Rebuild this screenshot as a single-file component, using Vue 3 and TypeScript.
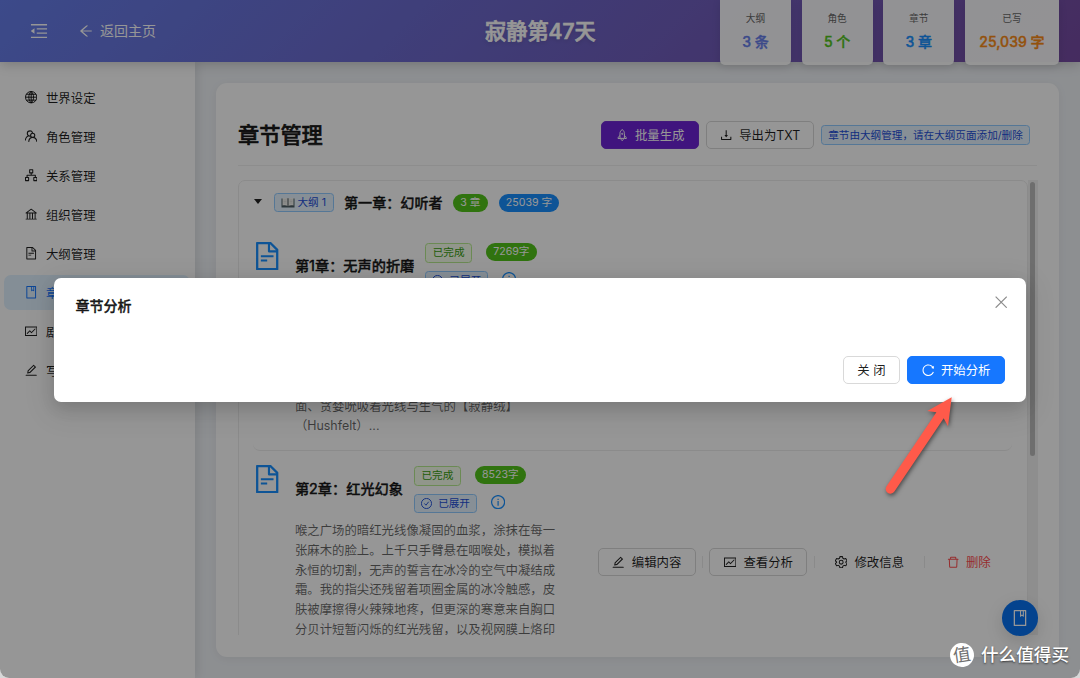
<script setup lang="ts">
import { h } from 'vue'

interface Glyph {
  fill?: string
  stroke?: string
  width?: number
}

const glyphs: Record<string, Glyph> = {
  menuFold: {
    fill: 'M400 370h512v72H400zM400 582h512v72H400zM112 160h800v72H112zM112 792h800v72H112zM115.4 518.9L271.7 642c5.8 4.6 14.4.5 14.4-6.9V388.9c0-7.400-8.500-11.500-14.400-6.900L115.400 505.100a8.740 8.740 0 000 13.800z',
  },
  arrowLeft: {
    fill: 'M872 474H286.9l350.2-304c5.6-4.9 2.2-14-5.2-14h-88.500c-3.900 0-7.600 1.400-10.500 3.900L155 487.800a31.960 31.960 0 000 48.300L535.100 866c1.500 1.300 3.300 2 5.200 2h91.500c7.400 0 10.800-9.200 5.200-14L286.900 550H872c4.400 0 8-3.600 8-8v-60c0-4.400-3.600-8-8-8z',
  },
  global: {
    stroke:
      'M512 100a412 412 0 100 824 412 412 0 100-824zM512 100c-230 200-230 624 0 824M512 100c230 200 230 624 0 824M512 100v824M100 512h824M165 300h694M165 724h694',
    width: 72,
  },
  team: {
    stroke:
      'M620 300a150 150 0 110 300 150 150 0 010-300zM330 920c20-190 130-320 290-320s280 130 310 320M450 520c-130-10-220-90-220-200 0-110 80-190 200-190 90 0 150 50 180 130M90 830c0-150 80-290 230-350',
    width: 78,
  },
  apartment: {
    stroke: 'M400 120h224v224H400zM100 680h224v224H100zM700 680h224v224H700zM512 344v168M212 680V512h600v168',
    width: 76,
  },
  bank: {
    fill: 'M894 462c30.900 0 43.800-39.700 18.700-58L530.800 126.200a31.810 31.810 0 00-37.600 0L111.300 404c-25.100 18.200-12.200 58 18.800 58H192v374h-72c-4.400 0-8 3.600-8 8v52c0 4.400 3.600 8 8 8h784c4.400 0 8-3.600 8-8v-52c0-4.400-3.600-8-8-8h-72V462h62zM512 196.700l271.100 197.200H240.900L512 196.700zM264 462h117v374H264V462zm189 0h117v374H453V462zm307 374H642V462h118v374z',
  },
  fileText: {
    fill: 'M854.6 288.6L639.4 73.4c-6-6-14.100-9.400-22.600-9.400H192c-17.700 0-32 14.300-32 32v832c0 17.700 14.300 32 32 32h640c17.700 0 32-14.300 32-32V311.300c0-8.500-3.400-16.700-9.400-22.700zM790.200 326H602V137.800L790.200 326zm1.800 562H232V136h302v216a42 42 0 0042 42h216v494zM504 618H320c-4.400 0-8 3.600-8 8v48c0 4.400 3.600 8 8 8h184c4.400 0 8-3.600 8-8v-48c0-4.400-3.600-8-8-8zM312 490v48c0 4.400 3.600 8 8 8h384c4.400 0 8-3.600 8-8v-48c0-4.400-3.600-8-8-8H320c-4.400 0-8 3.600-8 8z',
  },
  book: {
    fill: 'M832 64H192c-17.700 0-32 14.300-32 32v832c0 17.700 14.300 32 32 32h640c17.700 0 32-14.300 32-32V96c0-17.700-14.300-32-32-32zm-260 72h96v209.900L621.500 312 572 347.400V136zm220 752H232V136h280v296.900c0 3.300 1 6.600 3 9.300a15.900 15.900 0 0022.300 3.700l83.800-59.900 81.400 59.400c2.700 2 6 3.100 9.400 3.100 8.800 0 16-7.200 16-16V136h64v752z',
  },
  fund: {
    fill: 'M926 164H94c-17.700 0-32 14.300-32 32v640c0 17.700 14.300 32 32 32h832c17.700 0 32-14.300 32-32V196c0-17.700-14.300-32-32-32zm-40 632H134V236h752v560zm-658.900-82.300c3.100 3.100 8.200 3.100 11.300 0l172.500-172.500 114.400 114.500c3.100 3.100 8.200 3.100 11.300 0l297-297.200c3.100-3.100 3.100-8.200 0-11.300l-36.800-36.800a8.030 8.030 0 00-11.300 0L531 565 416.600 450.500a8.030 8.030 0 00-11.300 0l-214.900 215a8.030 8.030 0 000 11.300l36.700 36.900z',
  },
  edit: {
    fill: 'M257.7 752c2 0 4-.2 6-.5L431.900 722c2-.4 3.900-1.300 5.300-2.800l423.900-423.900a9.960 9.960 0 000-14.100L694.900 114.900c-1.900-1.900-4.400-2.900-7.100-2.900s-5.200 1-7.100 2.900L256.800 538.800c-1.500 1.500-2.400 3.300-2.800 5.300l-29.500 168.200a33.500 33.500 0 009.400 29.800c6.600 6.400 14.900 9.900 23.800 9.900zm67.400-174.400L687.800 215l73.300 73.300-362.700 362.600-88.900 15.700 15.600-89zM880 836H144c-17.700 0-32 14.300-32 32v36c0 4.400 3.600 8 8 8h784c4.400 0 8-3.600 8-8v-36c0-17.700-14.300-32-32-32z',
  },
  download: {
    fill: 'M505.7 661a8 8 0 0012.600 0l112-141.700c4.100-5.200.4-12.900-6.300-12.900h-74.100V168c0-4.400-3.600-8-8-8h-60c-4.400 0-8 3.600-8 8v338.300H400c-6.700 0-10.400 7.700-6.300 12.900l112 141.800zM878 626h-60c-4.400 0-8 3.600-8 8v154H214V634c0-4.400-3.600-8-8-8h-60c-4.400 0-8 3.600-8 8v198c0 17.700 14.300 32 32 32h684c17.700 0 32-14.300 32-32V634c0-4.400-3.600-8-8-8z',
  },
  trash: {
    fill: 'M360 184h304v72h72v-80c0-35.300-28.700-64-64-64H352c-35.300 0-64 28.700-64 64v80h72v-72zm504 72H160c-17.700 0-32 14.300-32 32v32c0 4.400 3.600 8 8 8h60.400l24.700 523c1.600 34.100 29.800 61 63.900 61h454c34.200 0 62.300-26.800 63.900-61l24.700-523H888c4.400 0 8-3.600 8-8v-32c0-17.700-14.300-32-32-32zM731.300 840H292.700l-24.200-512h487l-24.200 512z',
  },
  reload: {
    fill: 'M909.1 209.3l-56.4 44.1C775.8 155.1 656.2 92 521.9 92 290 92 102.3 279.5 102 511.5 101.7 743.7 289.8 932 521.9 932c181.3 0 335.8-115 394.6-276.1 1.5-4.2-.7-8.9-4.9-10.3l-56.7-19.5a8 8 0 00-10.1 4.8c-1.8 5-3.8 10-5.9 14.9-17.3 41-42.1 77.8-73.7 109.4A344.77 344.77 0 01655.9 829c-42.3 17.9-87.4 27-133.8 27-46.5 0-91.5-9.1-133.8-27A341.5 341.5 0 01279 755.2a342.16 342.16 0 01-73.7-109.4c-17.9-42.4-27-87.4-27-133.9s9.1-91.5 27-133.9c17.3-41 42.1-77.8 73.7-109.4 31.6-31.6 68.4-56.4 109.3-73.8 42.3-17.9 87.4-27 133.8-27 46.5 0 91.5 9.1 133.8 27a341.5 341.5 0 01109.3 73.8c9.9 9.9 19.2 20.4 27.8 31.4l-60.2 47a8 8 0 003 14.1l175.6 43c5 1.2 9.9-2.6 9.9-7.7l.8-180.9c-.1-6.6-7.8-10.3-13-6.2z',
  },
  rocket: {
    stroke:
      'M512 100c-100 70-160 170-160 290v350h320V390c0-120-60-220-160-290zM352 560c-80 20-140 90-140 190h140M672 560c80 20 140 90 140 190H672M512 370a44 44 0 110 88 44 44 0 010-88zM430 750c0 90 30 140 82 150 52-10 82-60 82-150',
    width: 72,
  },
  check: {
    stroke: 'M512 100a412 412 0 100 824 412 412 0 100-824zM340 510l130 140 220-280',
    width: 76,
  },
  info: {
    stroke: 'M512 100a412 412 0 100 824 412 412 0 100-824zM512 450v290M512 300v72',
    width: 76,
  },
  setting: {
    stroke:
      'M420 110h184l30 120 90 52 120-34 92 160-90 84v40l90 84-92 160-120-34-90 52-30 120H420l-30-120-90-52-120 34-92-160 90-84v-40l-90-84 92-160 120 34 90-52zM512 372a140 140 0 110 280 140 140 0 010-280z',
    width: 74,
  },
  close: { stroke: 'M110 110l804 804M914 110L110 914', width: 84 },
}

const Icon = (props: { name: string }) => {
  const g = glyphs[props.name]
  return h('svg', { class: 'icon', viewBox: '64 64 896 896' }, [
    g.fill
      ? h('path', { d: g.fill, fill: 'currentColor', 'fill-rule': 'evenodd' })
      : h('path', {
          d: g.stroke,
          fill: 'none',
          stroke: 'currentColor',
          'stroke-width': g.width,
          'stroke-linejoin': 'round',
        }),
  ])
}
Icon.props = ['name']

const nav = [
  { icon: 'global', label: '世界设定' },
  { icon: 'team', label: '角色管理' },
  { icon: 'apartment', label: '关系管理' },
  { icon: 'bank', label: '组织管理' },
  { icon: 'fileText', label: '大纲管理' },
  { icon: 'book', label: '章节管理', active: true },
  { icon: 'fund', label: '剧情分析' },
  { icon: 'edit', label: '写作风格' },
]

const stats = [
  { label: '大纲', value: '3 条', tone: 'indigo' },
  { label: '角色', value: '5 个', tone: 'green' },
  { label: '章节', value: '3 章', tone: 'blue' },
  { label: '已写', value: '25,039 字', tone: 'orange' },
]

const chapters = [
  {
    title: '第1章：无声的折磨',
    words: '7269字',
    cls: 'first',
    lines: ['面、贪婪吮吸着光线与生气的【寂静绒】', '（Hushfelt）...'],
  },
  {
    title: '第2章：红光幻象',
    words: '8523字',
    cls: 'second',
    lines: [
      '喉之广场的暗红光线像凝固的血浆，涂抹在每一',
      '张麻木的脸上。上千只手臂悬在咽喉处，模拟着',
      '永恒的切割，无声的誓言在冰冷的空气中凝结成',
      '霜。我的指尖还残留着项圈金属的冰冷触感，皮',
      '肤被摩擦得火辣辣地疼，但更深的寒意来自胸口',
      '分贝计短暂闪烁的红光残留，以及视网膜上烙印',
    ],
  },
]
</script>

<template>
  <div class="window">
    <header class="topbar">
      <Icon name="menuFold" class="fold" />
      <a class="back"><Icon name="arrowLeft" />返回主页</a>
      <h1>寂静第47天</h1>
      <div class="stats">
        <div v-for="s in stats" :key="s.label" class="stat">
          <span class="stat-label">{{ s.label }}</span>
          <strong :class="s.tone">{{ s.value }}</strong>
        </div>
      </div>
    </header>

    <div class="body">
      <nav class="sidebar">
        <a v-for="n in nav" :key="n.label" class="nav-item" :class="{ active: n.active }">
          <Icon :name="n.icon" />{{ n.label }}
        </a>
      </nav>

      <main class="content">
        <section class="card">
          <div class="card-head">
            <h2>章节管理</h2>
            <button class="btn purple"><Icon name="rocket" />批量生成</button>
            <button class="btn"><Icon name="download" />导出为TXT</button>
            <span class="tag blue-tag note">章节由大纲管理，请在大纲页面添加/删除</span>
          </div>

          <div class="scroller">
            <div class="panel">
              <div class="panel-head">
                <span class="caret"></span>
                <span class="tag blue-tag outline">
                  <svg class="open-book" viewBox="0 0 28 22">
                    <path d="M1 3h26v18H1z" fill="#4b5c63" />
                    <path d="M3 2c4-1 8-1 10.500 1v15c-3-2-7-2-10.500-1zM25 2c-4-1-8-1-10.500 1v15c3-2 7-2 10.500-1z" fill="#f3f3f0" />
                    <path d="M14 3v16" stroke="#6d7577" stroke-width="2" />
                    <path d="M5 6h6M5 9h6M5 12h6M17 6h6M17 9h6M17 12h6" stroke="#c4c8c8" stroke-width="1" />
                  </svg>
                  大纲 1
                </span>
                <strong>第一章：幻听者</strong>
                <span class="pill green-pill three">3 章</span>
                <span class="pill blue-pill">25039 字</span>
              </div>

              <article v-for="c in chapters" :key="c.title" class="chapter" :class="c.cls">
                <Icon name="fileText" class="doc" />
                <div class="chapter-main">
                  <div class="chapter-title">
                    <h3>{{ c.title }}</h3>
                    <div class="marks">
                      <div class="mark-row">
                        <span class="tag green-tag">已完成</span>
                        <span class="pill green-pill">{{ c.words }}</span>
                      </div>
                      <div class="mark-row">
                        <span class="tag blue-tag expanded"><Icon name="check" />已展开</span>
                        <Icon name="info" class="info" />
                      </div>
                    </div>
                  </div>
                  <div class="desc">
                    <div v-for="l in c.lines" :key="l">{{ l }}</div>
                  </div>
                </div>
                <div v-if="c.cls === 'second'" class="actions">
                  <button class="btn"><Icon name="edit" />编辑内容</button>
                  <i class="sep"></i>
                  <button class="btn"><Icon name="fund" />查看分析</button>
                  <i class="sep"></i>
                  <button class="btn text"><Icon name="setting" />修改信息</button>
                  <i class="sep"></i>
                  <button class="btn text danger"><Icon name="trash" />删除</button>
                </div>
              </article>
            </div>
            <div class="track"><div class="thumb"></div></div>
          </div>
        </section>
      </main>
    </div>

    <button class="fab"><Icon name="book" /></button>
    <div class="mask"></div>

    <div class="modal" role="dialog">
      <div class="modal-head">
        <h4>章节分析</h4>
        <Icon name="close" class="close" />
      </div>
      <div class="modal-foot">
        <button class="btn">关 闭</button>
        <button class="btn primary"><Icon name="reload" />开始分析</button>
      </div>
    </div>

    <svg class="arrow" viewBox="0 0 90 120">
      <path
        d="M81.700 7.300L57.300 21L66.400 22.300L16.400 96.400A4.700 4.700 0 0024.400 101.400L73.700 28.200L78 36.200z"
        fill="#ff5a4a"
      />
    </svg>
    <div class="watermark"><span class="seal">值</span>什么值得买</div>
  </div>
</template>

<style>
body {
  margin: 0;
  background: #d8d8d8;
}
</style>

<style scoped>
* {
  box-sizing: border-box;
}
.window {
  position: relative;
  width: 1080px;
  height: 678px;
  overflow: hidden;
  border-radius: 0 0 9px 9px;
  background: #f0f3f7;
  color: rgba(0, 0, 0, 0.88);
  font: 12.4px/20px Inter, 'Noto Sans CJK SC', sans-serif;
}
h1,
h2,
h3,
h4 {
  margin: 0;
}
h1,
h2,
h3,
h4,
strong {
  font-weight: 500;
  -webkit-text-stroke: 0.4px currentColor;
}
.icon {
  flex: none;
  width: 12.4px;
  height: 12.4px;
  display: block;
}
.topbar {
  position: relative;
  z-index: 2;
  display: flex;
  align-items: center;
  height: 62px;
  padding: 0 21px 0 30px;
  color: #fff;
  background: linear-gradient(135deg, #667eea 0%, #764ba2 100%);
  box-shadow: 0 2px 12px rgba(0, 0, 0, 0.2);
}
.fold {
  width: 18px;
  height: 18px;
}
.back {
  display: flex;
  align-items: center;
  gap: 7px;
  width: 406px;
  margin-left: 31px;
  font-size: 14px;
}
.back .icon {
  width: 14px;
  height: 14px;
}
.topbar h1 {
  font-size: 21.2px;
  line-height: 30px;
  white-space: nowrap;
  -webkit-text-stroke-width: 0.7px;
  text-shadow: 0 2px 4px rgba(0, 0, 0, 0.15);
}
.stats {
  display: flex;
  gap: 10.600px;
  height: 65px;
  margin: 3px 0 0 auto;
}
.stat {
  display: flex;
  flex-direction: column;
  align-items: center;
  min-width: 71px;
  padding: 9.500px 10px 0;
  border-radius: 0 0 5px 5px;
  background: rgba(255, 255, 255, 0.96);
  box-shadow: 0 2px 8px rgba(0, 0, 0, 0.1);
}
.stat:last-child {
  width: 94.200px;
}
.stat-label {
  font-size: 9.7px;
  line-height: 18px;
  color: #666;
}
.stat strong {
  font-size: 14px;
  line-height: 20px;
  margin-top: 4px;
  white-space: nowrap;
}
.indigo {
  color: #667eea;
}
.green {
  color: #52c41a;
}
.blue {
  color: #1890ff;
}
.orange {
  color: #fa8c16;
}
.body {
  display: flex;
  height: 616px;
}
.sidebar {
  width: 195px;
  padding: 18px 5px 0 4px;
  display: flex;
  flex-direction: column;
  gap: 4px;
  background: #fff;
  box-shadow: 2px 0 10px rgba(0, 0, 0, 0.1);
}
.nav-item {
  display: flex;
  align-items: center;
  gap: 8.600px;
  height: 35px;
  padding: 2px 0 0 21px;
  border-radius: 7px;
}
.nav-item .icon {
  margin-top: -2px;
}
.active {
  color: #1677ff;
  background: #e0f1ff;
}
.content {
  flex: 1;
  padding: 21px;
}
.card {
  width: 843px;
  height: 574px;
  padding: 22px;
  border-radius: 11px;
  background: #fff;
  box-shadow: 0 2px 10px rgba(0, 0, 0, 0.06);
}
.card-head {
  display: flex;
  align-items: center;
  height: 61px;
  padding-right: 7px;
  border-bottom: 1px solid #f0f0f0;
}
.card-head h2 {
  flex: 1;
  font-size: 21.2px;
  line-height: 30px;
  -webkit-text-stroke-width: 0.6px;
}
.btn {
  display: flex;
  align-items: center;
  justify-content: center;
  gap: 7px;
  height: 28.400px;
  width: 98px;
  padding: 2px 0 0;
  border: 1px solid #d9d9d9;
  border-radius: 5px;
  background: #fff;
  color: inherit;
  font: inherit;
  white-space: nowrap;
}
.btn .icon {
  margin-top: -2px;
}
.card-head .btn {
  width: 108px;
  margin-right: 7px;
}
.card-head .purple {
  width: 98px;
  color: #fff;
  border-color: #722ed1;
  background: #6d23d6;
}
.tag {
  display: inline-flex;
  align-items: center;
  height: 19.500px;
  padding: 0 6.500px;
  border: 1px solid;
  border-radius: 3.500px;
  font-size: 10.600px;
  line-height: 17px;
  white-space: nowrap;
}
.blue-tag {
  color: #1d4ed8;
  background: #e6f4ff;
  border-color: #91caff;
}
.green-tag {
  color: #389e0d;
  background: #f6ffed;
  border-color: #b7eb8f;
}
.note {
  width: 209px;
  justify-content: center;
}
.scroller {
  display: flex;
  width: 799.500px;
  height: 455px;
  margin-top: 14px;
  overflow: hidden;
}
.panel {
  width: 789.500px;
  height: 800px;
  border: 1px solid #ececec;
  border-radius: 7px;
}
.track {
  width: 10px;
  height: 455px;
  padding: 2px 2.300px;
  background: #f2f2f2;
}
.thumb {
  width: 5.700px;
  height: 274px;
  border-radius: 3px;
  background: #bcbcbc;
}
.panel-head {
  display: flex;
  align-items: center;
  height: 43px;
  padding-left: 15px;
}
.caret {
  margin-top: -2px;
  border: 4px solid transparent;
  border-top: 5px solid #222;
  border-bottom: 0;
}
.outline {
  width: 59.500px;
  margin-left: 12px;
  padding: 0 5.500px;
  gap: 3px;
}
.open-book {
  width: 14px;
  height: 11px;
}
.panel-head strong {
  margin: 0 10.500px;
  font-size: 14.100px;
}
.pill {
  height: 18px;
  padding: 0 7.200px;
  border-radius: 9px;
  color: #fff;
  font-size: 10.600px;
  line-height: 18px;
  white-space: nowrap;
}
.three {
  width: 35px;
  margin-right: 10.500px;
}
.green-pill {
  background: #52c41a;
}
.blue-pill {
  background: #1890ff;
}
.chapter {
  display: flex;
  margin: 0 15px 0 14px;
  padding-top: 18px;
}
.first {
  height: 227px;
  border-bottom: 1px solid #ededed;
  border-radius: 0 0 7px 7px;
}
.second {
  padding-top: 14px;
}
.doc {
  width: 28.400px;
  height: 28.400px;
  margin-left: -0.500px;
  color: #1890ff;
}
.chapter-main {
  width: 270px;
  margin-left: 14px;
}
.chapter-title {
  display: flex;
  gap: 11px;
  height: 47px;
}
.chapter-title h3 {
  font-size: 14.200px;
  line-height: 20px;
  padding-top: 14px;
  white-space: nowrap;
}
.marks {
  display: flex;
  flex-direction: column;
  gap: 8px;
  padding-top: 1px;
}
.mark-row {
  display: flex;
  height: 19.500px;
  gap: 14px;
}
.expanded {
  gap: 6px;
  padding: 0 6.200px;
}
.expanded .icon {
  width: 11px;
  height: 11px;
}
.info {
  width: 14.200px;
  height: 14.200px;
  margin-top: 1px;
  color: #1890ff;
}
.desc {
  margin-top: 9px;
  line-height: 19.800px;
  color: rgba(0, 0, 0, 0.6);
  white-space: nowrap;
}
.first .desc {
  margin-top: 107.500px;
}
.actions {
  display: flex;
  align-items: center;
  height: 28px;
  margin: 83px 0 0 33px;
}
.sep {
  width: 1px;
  height: 12px;
  margin: 0 6.300px;
  background: #ebebeb;
}
.text {
  width: 97px;
  border: 0;
  background: none;
}
.danger {
  width: 74px;
  color: #ff4d4f;
}
.fab {
  position: absolute;
  left: 1002px;
  top: 600px;
  width: 35.500px;
  height: 35.500px;
  display: flex;
  align-items: center;
  justify-content: center;
  padding: 0;
  border: 0;
  border-radius: 50%;
  color: #fff;
  background: #0873f2;
  box-shadow: 0 6px 18px rgba(0, 0, 0, 0.14);
}
.fab .icon {
  width: 16px;
  height: 16px;
}
.mask {
  position: absolute;
  inset: 0;
  z-index: 3;
  background: rgba(0, 0, 0, 0.41);
}
.modal {
  position: absolute;
  z-index: 4;
  left: 54px;
  top: 277.500px;
  width: 972px;
  height: 124px;
  padding: 17px 21px;
  border-radius: 7px;
  background: #fff;
  box-shadow: 0 6px 16px rgba(0, 0, 0, 0.12), 0 8px 28px 6px rgba(0, 0, 0, 0.08);
}
.modal-head {
  display: flex;
  justify-content: space-between;
  height: 61px;
}
.modal h4 {
  margin-left: 0.500px;
  font-size: 14px;
  line-height: 21px;
}
.close {
  margin-top: 1px;
  margin-right: -2px;
  color: #8c8c8c;
}
.modal-foot {
  display: flex;
  justify-content: flex-end;
  gap: 7px;
}
.modal .btn {
  width: 57px;
}
.modal .primary {
  width: 98px;
  color: #fff;
  border-color: #1677ff;
  background: #1677ff;
}
.arrow {
  position: absolute;
  z-index: 5;
  left: 870px;
  top: 390px;
  width: 90px;
  height: 120px;
  filter: drop-shadow(1px 2px 2px rgba(0, 0, 0, 0.5));
}
.watermark {
  position: absolute;
  z-index: 5;
  left: 950px;
  top: 643px;
  display: flex;
  align-items: center;
  gap: 7px;
  height: 24px;
  color: #fff;
  font-size: 17.600px;
  font-weight: 500;
  white-space: nowrap;
  text-shadow: 0 1px 2px rgba(0, 0, 0, 0.6);
}
.seal {
  width: 24px;
  height: 24px;
  border-radius: 50%;
  background: #fff;
  color: #707070;
  font-weight: 400;
  line-height: 24px;
  text-align: center;
  text-shadow: none;
  transform: rotate(-8deg);
}
</style>
